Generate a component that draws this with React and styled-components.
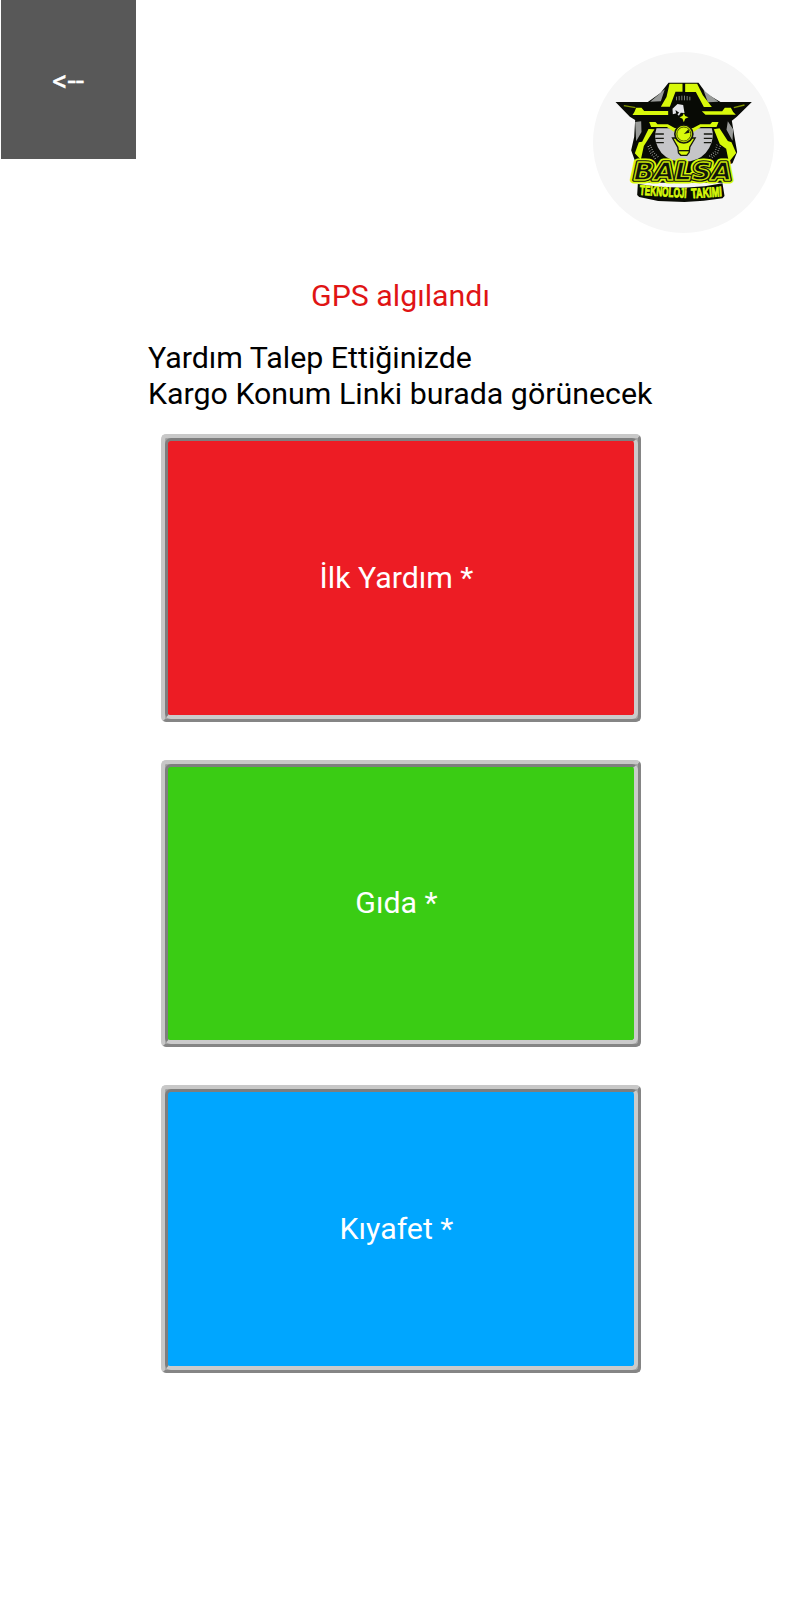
import React from "react";
import styled, { createGlobalStyle } from "styled-components";

const GlobalStyle = createGlobalStyle`
  * { box-sizing: border-box; }
  body { margin: 0; background: #fff; font-family: Roboto, "Liberation Sans", sans-serif; }
`;

const Screen = styled.main`
  width: 801px;
  height: 1600px;
  overflow: hidden;
  background: #fff;
`;

const Header = styled.header`
  display: flex;
  justify-content: space-between;
  height: 280px;
  padding: 0 27px 0 1px;
`;

const BackButton = styled.button`
  width: 134.5px;
  height: 159px;
  border: 0;
  padding: 2px 0 0;
  background: #585858;
  color: #fff;
  font: 400 30px/30px Roboto, sans-serif;
  -webkit-text-stroke: 0.3px #fff;
`;

const Badge = styled.div`
  width: 181px;
  height: 181px;
  margin-top: 52px;
  border-radius: 50%;
  background: #f6f6f6;
  svg { display: block; }
`;

const Status = styled.p`
  margin: 0;
  height: 60px;
  text-align: center;
  color: #e01414;
  font-size: 30.3px;
  line-height: 32px;
`;

const Note = styled.p`
  margin: 0;
  padding: 0 0 0 148px;
  height: 94px;
  color: #000;
  font-size: 30.35px;
  line-height: 36.2px;
  white-space: nowrap;
`;

const Actions = styled.section`
  display: flex;
  flex-direction: column;
  gap: 38px;
  padding-left: 160.5px;
`;

const ActionButton = styled.button`
  display: flex;
  width: 480px;
  height: 287.5px;
  border: solid;
  border-width: 4px 3px 3px 4px;
  border-color: #c8c8c8 #858585 #858585 #c8c8c8;
  border-radius: 5px;
  padding: 0;
  background: #a4a4a4;
`;

const Face = styled.span`
  flex: 1;
  align-self: stretch;
  display: flex;
  align-items: center;
  justify-content: center;
  border: solid;
  border-width: 3px 4px 4px 3px;
  border-color: #7e7e7e #cbcbcb #cbcbcb #7e7e7e;
  border-radius: 6px;
  padding: 0 8px 0 0;
  background: ${(p) => p.$fill};
  color: #fff;
  font: 400 30.3px/36px Roboto, sans-serif;
`;

const Logo = () => (
  <svg width="181" height="181" viewBox="9.5 20 543 543">
    <path d="M236 112H326L350 145 392 170H486L441 214 426 226 434 275 442 320 428 354 400 366H160L138 354 124 315 133 275 136 224 120 214 77 170H174L212 143Z" fill="#080a05" />
    <path d="M181 169 225 132 213 168ZM341 135 386 169 354 171ZM136 230 154 228 155 260 139 288ZM414 228 430 252 428 286 410 253Z" fill="#999b99" />
    <path d="M200 249H366Q375 278 358 308 340 340 302 348H263Q221 341 204 306 190 277 200 249Z" fill="#c5c5c8" />
    <path d="M239 115H278V139H257L240 184H213L230 155ZM286 115H322L339 150 366 185H342L318 140H286Z" fill="#d8f90b" />
    <path d="M102 181 137 187M432 187 464 179" stroke="#829600" strokeWidth="4" />
    <path d="M134 199 139 187H155L163 197H235V209H128ZM336 198H397L405 187H423L430 200 438 208H347Z" fill="#d8f90b" />
    <path d="M178 230H197L203 237H234L260 251 253 260 231 245H184ZM386 230H367L361 237H331L304 251 311 260 333 245H380Z" fill="#d8f90b" />
    <path d="M176 251 194 252 162 302 153 343 135 324 147 291 157 289ZM372 252 389 249 414 287 425 291 439 323 417 350 409 310 390 297Z" fill="#d8f90b" />
    <path d="M175 303 182 322 197 341M181 299 190 320 208 338M391 302 383 323 362 340M382 298 376 319 356 335" fill="none" stroke="#adb0ad" strokeWidth="5" strokeDasharray="2 5" />
    <path d="M196 266H222M196 279H222M199 292H222M342 266H368M342 279H368M342 292H364" stroke="#15170f" strokeWidth="4" />
    <path d="M260 154V165M268 152V165M276 151V165M284 151V165M292 152V165M300 154V165" stroke="#7b7f7a" strokeWidth="3" />
    <path d="M248 190 263 176 280 179 284 203 273 202 267 211 260 204 249 207Z" fill="#e5e5e9" />
    <path d="M257 194 268 202 260 209Z" fill="#080a05" />
    <path d="M282 204 286 212 296 216 286 220 282 231 278 220 269 216 278 212Z" fill="#d8f90b" />
    <path d="M248 278 264 306 266 323 273 330H291L298 321 300 305 316 278Z" fill="#d8f90b" stroke="#15170c" strokeWidth="4" />
    <circle cx="282" cy="266" r="27" fill="#d8f90b" stroke="#15170c" strokeWidth="5" />
    <circle cx="282" cy="266" r="21" fill="none" stroke="#4b5700" strokeWidth="3" />
    <path d="M282 266 296 252 299 262Z" fill="#15170c" />
    <path d="M266 316H298" stroke="#15170c" strokeWidth="4" />
    <path d="M150 350H410L425 385 402 412H146L130 392Z" fill="#090b04" />
    <g fontFamily="DejaVu Sans, sans-serif" fontStyle="italic" fontWeight="700" fontSize="72" strokeLinejoin="round">
      <text x="131" y="405" textLength="296" lengthAdjust="spacingAndGlyphs" fill="#d8f90b" stroke="#d8f90b" strokeWidth="21">BALSA</text>
      <text x="131" y="405" textLength="296" lengthAdjust="spacingAndGlyphs" fill="#11150a" stroke="#11150a" strokeWidth="11">BALSA</text>
      <text x="131" y="405" textLength="296" lengthAdjust="spacingAndGlyphs" fill="#11150a" stroke="#c2df08" strokeWidth="4">BALSA</text>
    </g>
    <path d="M144 416 206 424 281 427 345 423 398 414 404 452 398 459 342 466 284 470 205 467 148 455 142 449Z" fill="#090b04" />
    <g fontFamily="Liberation Sans, sans-serif" fontWeight="700" fontSize="41" fill="#d8f90b" stroke="#d8f90b" strokeWidth="2.5">
      <text x="149" y="448" textLength="141" lengthAdjust="spacingAndGlyphs" transform="rotate(4 149 448)">TEKNOLOJi</text>
      <text x="305" y="459" textLength="92" lengthAdjust="spacingAndGlyphs" transform="rotate(-4 305 459)">TAKIMI</text>
    </g>
  </svg>
);

const ACTIONS = [
  { label: "İlk Yardım *", fill: "#ed1c24" },
  { label: "Gıda *", fill: "#3acc14" },
  { label: "Kıyafet *", fill: "#00a6ff" },
];

export default function App() {
  return (
    <Screen>
      <GlobalStyle />
      <Header>
        <BackButton>&lt;--</BackButton>
        <Badge><Logo /></Badge>
      </Header>
      <Status>GPS algılandı</Status>
      <Note>Yardım Talep Ettiğinizde<br />Kargo Konum Linki burada görünecek</Note>
      <Actions>
        {ACTIONS.map((a) => (
          <ActionButton key={a.label}>
            <Face $fill={a.fill}>{a.label}</Face>
          </ActionButton>
        ))}
      </Actions>
    </Screen>
  );
}
